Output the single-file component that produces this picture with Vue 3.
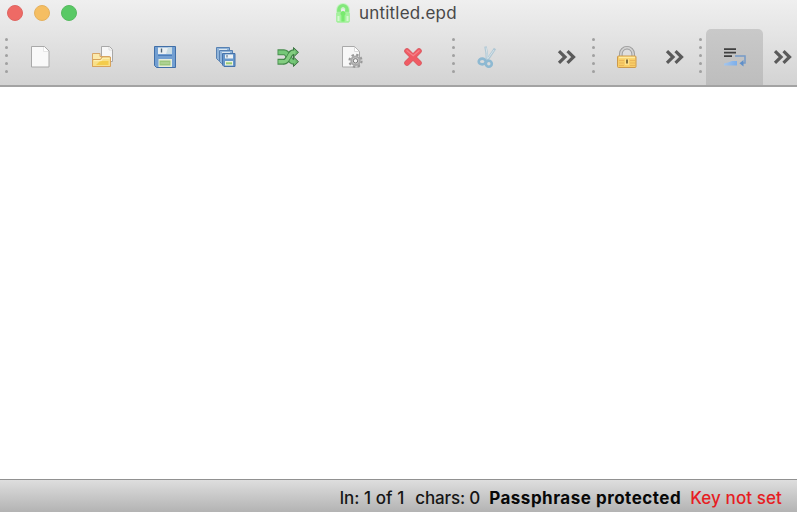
<script setup>
const dots = 5
</script>

<template>
  <div class="window">
    <header class="titlebar">
      <div class="lights">
        <span class="light red"></span>
        <span class="light amber"></span>
        <span class="light green"></span>
      </div>
      <div class="title">
        <svg width="16" height="20" viewBox="0 0 16 20">
          <path d="M3.5 9V7a4.5 4.5 0 0 1 9 0v2" fill="none" stroke="#c9f2c6" stroke-width="5" />
          <path d="M4 9V7a4 4 0 0 1 8 0v2" fill="none" stroke="#83e87b" stroke-width="3.8" />
          <rect x="1.7" y="9.2" width="12.6" height="10" rx="1" fill="#a5f39d" stroke="#a2ee9b" />
          <path d="M8 8a2.6 2.6 0 0 1 1.6 4.6V18.5H6.4v-5.9A2.6 2.6 0 0 1 8 8Z" fill="#78ea6f" />
          <path d="M3.5 13v5M12.5 13v5" stroke="#d5f8d1" stroke-width="2" />
          <path d="M6 6.5a2 2 0 0 1 4 0" fill="none" stroke="#cdf3ca" />
        </svg>
        <span class="name">untitled.epd</span>
      </div>
    </header>

    <nav class="toolbar">
      <div class="handle"><i v-for="n in dots" :key="n"></i></div>
      <button class="tool document">
        <svg width="24" height="24" viewBox="0 0 24 24">
          <path d="M3.5 1.5h13l4.5 4.5v16h-17.5Z" fill="#f9f9f9" stroke="#a9a9a9" stroke-linejoin="round" />
          <path d="M15.5 2v4.5h4.5" fill="#fff" stroke="#e6e6e6" />
        </svg>
      </button>
      <button class="tool">
        <svg width="24" height="24" viewBox="0 0 24 24">
          <path d="M11.5 1.5h8l3 3v12h-11Z" fill="#f7f7f7" stroke="#a8a8a8" stroke-linejoin="round" />
          <path d="M19 2v3h3" fill="none" stroke="#dcdcdc" />
          <path d="M2.5 8.5h7.5v3h9.5v10h-17Z" fill="#fbe9ac" stroke="#d8a565" stroke-linejoin="round" />
          <path d="M2.5 14.5h8l1.5-2.5h8.5v9.5h-18Z" fill="#f8e089" stroke="#d7a35b" stroke-linejoin="round" />
          <path d="M10 16h8.5v4H6Z" fill="#f3cc4c" />
          <path d="M4 15.7h7.3l1.4-2.5h6.8" fill="none" stroke="#fff4bd" />
        </svg>
      </button>
      <button class="tool save">
        <svg width="24" height="24" viewBox="0 0 24 24">
          <path d="M1.5 1.5h21v21h-19l-2-2Z" fill="#729fd2" stroke="#416fa7" stroke-linejoin="round" />
          <path d="M5 2.5h14v6.5H5Z" fill="#e9eff2" />
          <path d="M15 2.5h4v6.5h-6Z" fill="#c9dce4" />
          <path d="M8.5 3.5v4" stroke="#4c6274" stroke-width="1.4" />
          <path d="M5 10.5h14" stroke="#4c7eb9" />
          <rect x="5.5" y="14" width="13.5" height="8" fill="#e7edda" />
          <rect x="6.5" y="15.5" width="11" height="5" fill="#9bc77c" />
          <path d="M7.5 18h9" stroke="#bfdba8" />
        </svg>
      </button>
      <button class="tool">
        <svg width="24" height="24" viewBox="0 0 24 24">
          <g v-for="p in [0, 3]" :key="p" :transform="`translate(${p} ${p})`">
            <path d="M2.5 2.5h13v13h-11l-2-2Z" fill="#8fb3d9" stroke="#5781b2" />
            <path d="M5 4h8v4H5Z" fill="#dae6ee" />
          </g>
          <path d="M8.5 8.5h12.5v13h-11l-1.5-1.5Z" fill="#6797cb" stroke="#4673aa" />
          <path d="M11 9.5h8v4h-8Z" fill="#edf2f5" />
          <path d="M13 10v2.5" stroke="#536b80" />
          <path d="M11 16h8v4.5h-8Z" fill="#edf3df" />
          <path d="M12 18.3h6" stroke="#9aca76" stroke-width="2" />
        </svg>
      </button>
      <button class="tool">
        <svg width="24" height="24" viewBox="0 0 24 24">
          <g fill="none" stroke-linejoin="round">
            <path d="M1.5 7.3h6.5c5 0 4.5 9.4 9.5 9.4h1" stroke="#488d4e" stroke-width="6" />
            <path d="M1.5 16.7h6.5c5 0 4.5-9.4 9.5-9.4h1" stroke="#488d4e" stroke-width="6" />
            <path d="M17.5 2.5v9.6l5-4.8ZM17.5 11.9v9.6l5-4.8Z" fill="#67b568" stroke="#3f7545" />
            <path d="M2.4 7.3H8c5 0 4.5 9.4 9.5 9.4h2" stroke="#75c878" stroke-width="3.8" />
            <path d="M7 16.7h1c5 0 4.5-9.4 9.5-9.4" stroke="#3d8144" stroke-width="5" />
            <path d="M2.4 16.7H8c5 0 4.5-9.4 9.5-9.4h2" stroke="#83cd80" stroke-width="3.5" />
          </g>
        </svg>
      </button>
      <button class="tool gear">
        <svg width="24" height="24" viewBox="0 0 24 24">
          <path d="M2.5 1.5h12l5 5v15.5h-17Z" fill="#f7f7f7" stroke="#a9a9a9" stroke-linejoin="round" />
          <path d="M14.5 2v4.5h4.5" fill="#fff" stroke="#dadada" />
          <circle cx="15.5" cy="15.8" r="6" fill="none" stroke="#999" stroke-width="2.2" stroke-dasharray="2.4 2.31" />
          <circle cx="15.5" cy="15.8" r="4.2" fill="#d2d2d2" stroke="#a9a9a9" stroke-width="2" />
          <circle cx="15.5" cy="15.8" r="2.2" fill="#f4f4f4" stroke="#777" />
        </svg>
      </button>
      <button class="tool remove">
        <svg width="24" height="24" viewBox="0 0 24 24">
          <g fill="none" stroke-linecap="round">
            <path d="M6 6 18 18M18 6 6 18" stroke="#d95d64" stroke-width="5.6" />
            <path d="M6 6 18 18M18 6 6 18" stroke="#f05b64" stroke-width="4" />
            <path d="M6 5.7l6.2 5L18 5.7" stroke="#f58389" stroke-width="1.3" />
          </g>
        </svg>
      </button>
      <div class="handle second"><i v-for="n in dots" :key="n"></i></div>
      <button class="tool cut">
        <svg width="24" height="24" viewBox="0 0 24 24">
          <g fill="none">
            <path d="M9.5 1.5q1.5 6 1.5 13M19 3.5l-8 12" stroke="#b0c8d5" stroke-width="2.6" />
            <path d="M10 2.5q1.3 6 1.2 11M18 5l-6.5 9" stroke="#d6e3e9" stroke-width="1" />
            <ellipse cx="6.2" cy="16.5" rx="3.5" ry="2.9" stroke="#8eb9d2" stroke-width="2.6" />
            <circle cx="12.8" cy="18.8" r="3" stroke="#8eb9d2" stroke-width="2.6" />
          </g>
        </svg>
      </button>
      <button class="more first">
        <svg width="20" height="16" viewBox="0 0 20 16"><path d="M2 2.2 8 8 2 13.8M10.5 2.2 16.5 8l-6 5.8" /></svg>
      </button>
      <div class="handle third"><i v-for="n in dots" :key="n"></i></div>
      <button class="tool lock">
        <svg width="24" height="24" viewBox="0 0 24 24">
          <path d="M5.8 12V8.9a6 6 0 0 1 12.4 0V12" fill="none" stroke="#9a9a9a" stroke-width="3.6" />
          <path d="M5.8 12V8.9a6 6 0 0 1 12.4 0V12" fill="none" stroke="#d1d1d1" stroke-width="1.8" />
          <rect x="2.5" y="11" width="18.5" height="11.5" rx="1" fill="#f8ce68" stroke="#cd9a4c" />
          <path d="M4 12.5h16" stroke="#ffeb9f" stroke-width="1.5" />
          <path d="M4 15.5h5M4 18h5M4 20.5h5M15 15.5h5M15 18h5M15 20.5h5" stroke="#ebb659" />
          <path d="M10 14h4v6h-4Z" fill="#ffe28a" />
          <path d="M12 14.5v4" stroke="#675429" stroke-width="1.6" />
        </svg>
      </button>
      <button class="more second-more">
        <svg width="20" height="16" viewBox="0 0 20 16"><path d="M2 2.2 8 8 2 13.8M10.5 2.2 16.5 8l-6 5.8" /></svg>
      </button>
      <div class="handle fourth"><i v-for="n in dots" :key="n"></i></div>
      <button class="tool active">
        <svg width="24" height="24" viewBox="0 0 24 24">
          <defs>
            <linearGradient id="wrapped" x1="0" x2="1" y1="0" y2="0">
              <stop offset="0" stop-color="#a5c6ec" />
              <stop offset="1" stop-color="#7baeeb" />
            </linearGradient>
          </defs>
          <path d="M1 4.2h12M1 7.7h12M1 11.2h8" stroke="#3f3f3f" stroke-width="1.7" />
          <path d="M12 11h10v7h-3" fill="none" stroke="#769bc8" stroke-width="1.5" />
          <path d="M20.5 15 16.5 18.2l4 3.2Z" fill="#5f8fc9" />
          <path d="M1 18.5q4-.8 8-2.5h5v4.6H1Z" fill="url(#wrapped)" />
        </svg>
      </button>
      <button class="more last">
        <svg width="20" height="16" viewBox="0 0 20 16"><path d="M2 2.2 8 8 2 13.8M10.5 2.2 16.5 8l-6 5.8" /></svg>
      </button>
    </nav>

    <main class="editor"></main>

    <footer class="status">
      <span class="line">ln: 1 of 1</span>
      <span class="chars">chars: 0</span>
      <strong>Passphrase protected</strong>
      <span class="key">Key not set</span>
    </footer>
  </div>
</template>

<style>
body {
  margin: 0;
  overflow: hidden;
}
</style>

<style scoped>
.window {
  width: 797px;
  height: 512px;
  display: flex;
  flex-direction: column;
  overflow: hidden;
  background: linear-gradient(#efefef, #e4e4e4 35px, #d3d3d3 85px);
  font-family: Inter, "Liberation Sans", sans-serif;
}
.titlebar {
  flex: 0 0 27px;
  display: grid;
  grid-template-columns: 334px 1fr;
}
.lights {
  display: flex;
  gap: 11px;
  padding: 4.5px 0 0 6.5px;
}
.light {
  box-sizing: border-box;
  width: 16px;
  height: 16px;
  border-radius: 50%;
}
.red { background: #ee6a65; border: 1px solid #df6662; }
.amber { background: #f5be62; border: 1px solid #e5b15e; }
.green { background: #59c965; border: 1px solid #57ba60; }
.title {
  display: flex;
  align-items: center;
  gap: 8px;
  padding: 0 0 1px 1px;
}
.name {
  color: #484848;
  font-size: 17px;
  letter-spacing: 0.2px;
  line-height: 20px;
  white-space: nowrap;
}
.toolbar {
  box-sizing: border-box;
  flex: 0 0 60px;
  display: flex;
  border-bottom: 2px solid #a3a3a3;
}
.handle {
  flex: 0 0 9px;
  box-sizing: border-box;
  display: flex;
  flex-direction: column;
  align-items: center;
  gap: 5px;
  padding: 11px 0 0 4px;
}
.handle i {
  width: 3px;
  height: 3px;
  border-radius: 50%;
  background: #a0a0a0;
}
.handle.second { flex-basis: 21px; padding-left: 0; }
.handle.third { flex-basis: 10px; padding-left: 0; }
.handle.fourth { flex-basis: 11px; padding-left: 0; }
button {
  box-sizing: border-box;
  margin: 0;
  border: 0;
  padding: 1px 0 0;
  background: transparent;
  display: flex;
  align-items: center;
  justify-content: center;
}
.tool { flex: 0 0 62px; padding-top: 2px; }
.save { padding-left: 2px; }
.gear { padding-left: 4px; }
.remove { padding-left: 2px; }
.cut { flex-basis: 46px; padding-left: 2px; }
.lock { flex-basis: 57px; }
.more.first { flex: 0 0 43px; margin-left: 35px; }
.more.second-more { flex: 0 0 40px; }
.more.last { flex: 0 0 34px; padding-left: 6px; }
.more path {
  fill: none;
  stroke: #5a5a5a;
  stroke-width: 3.2;
}
.tool.active {
  flex-basis: 57px;
  margin-top: 2px;
  padding: 0 0 1px;
  border-radius: 5px 5px 0 0;
  background: linear-gradient(#c9c9c9, #bdbdbd);
}
.editor {
  flex: 1;
  background: #fff;
}
.status {
  box-sizing: border-box;
  flex: 0 0 33px;
  display: flex;
  align-items: center;
  justify-content: flex-end;
  gap: 9px;
  padding: 4px 15px 0 0;
  border-top: 1px solid #919191;
  background: linear-gradient(#dedede, #b3b3b3);
  color: #161616;
  font-size: 17px;
  font-weight: 500;
  line-height: 20px;
  white-space: nowrap;
}
.line { letter-spacing: 0.05px; margin-right: 2px; }
.chars { letter-spacing: -0.15px; }
strong { color: #080808; font-weight: 700; letter-spacing: 0.5px; }
.key { color: #e61d23; letter-spacing: 0.1px; }
</style>
